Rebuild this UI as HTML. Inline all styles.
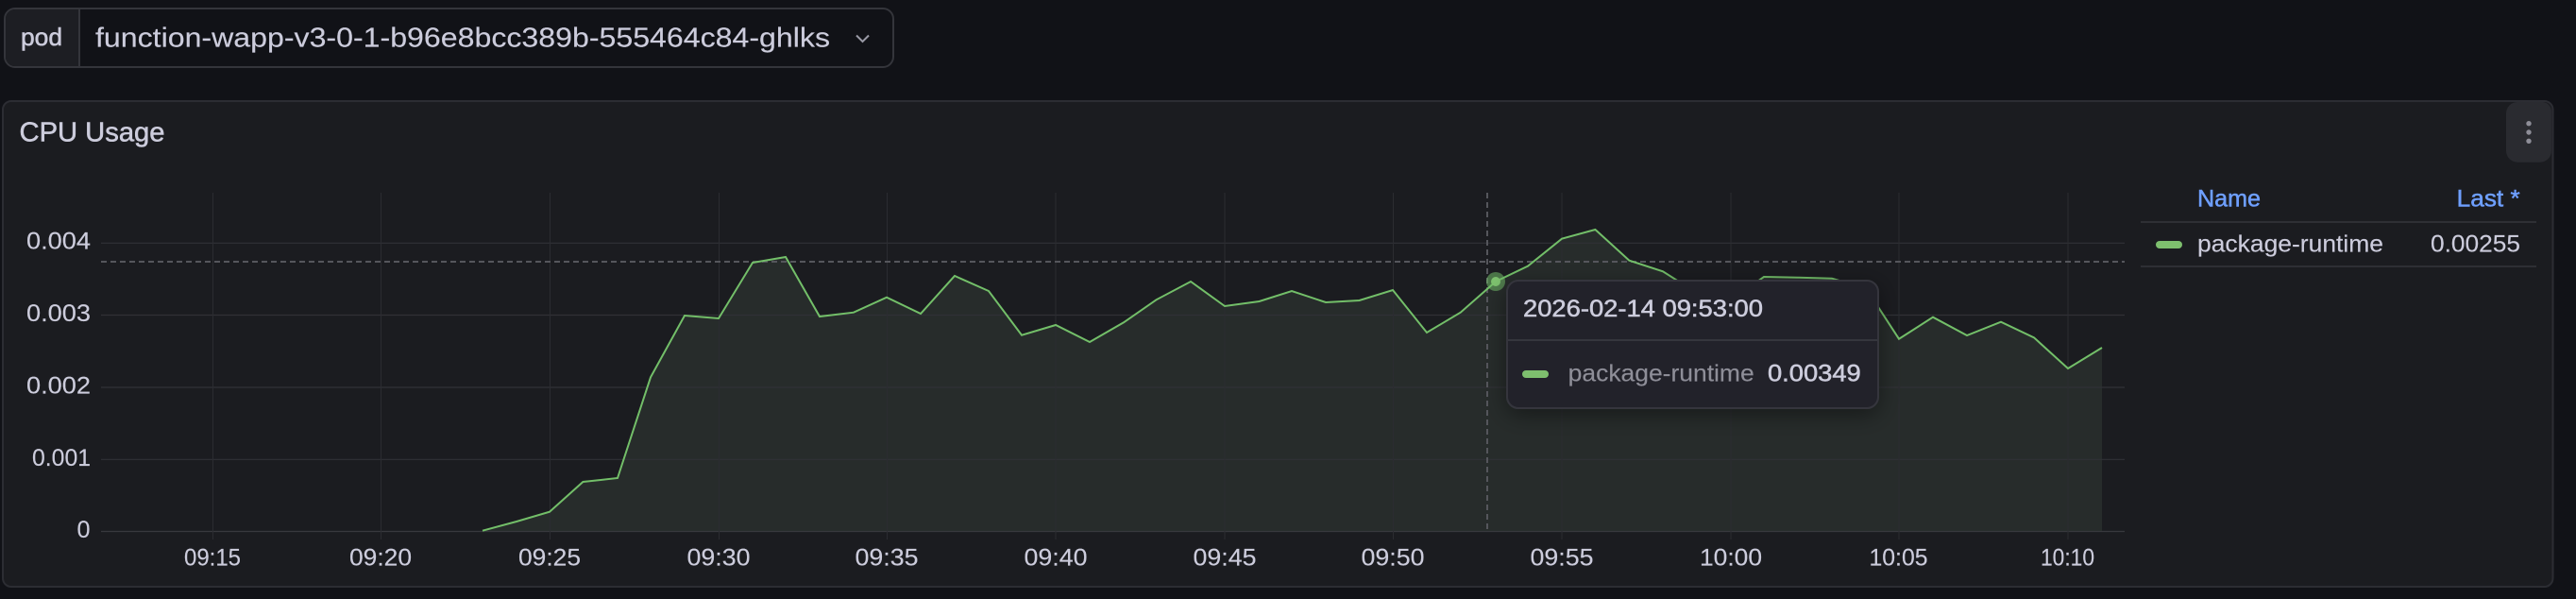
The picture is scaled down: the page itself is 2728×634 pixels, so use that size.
<!DOCTYPE html>
<html lang="en">
<head>
<meta charset="utf-8">
<title>CPU Usage</title>
<style>
html,body{margin:0;padding:0;width:2728px;height:634px;overflow:hidden;background:#111217}
svg{display:block}
text{font-family:"Liberation Sans",sans-serif;font-size:25px;fill:#ccccdc;stroke:#ccccdc;stroke-width:.15}
.m{stroke:#ccccdc;stroke-width:.55}
.xl{text-anchor:middle}
.grid line{stroke:#303136;stroke-width:1.2}
.grid g line{stroke:#2b2c31;stroke-width:1}
</style>
</head>
<body>
<svg width="2728" height="634" viewBox="0 0 2728 634" xmlns="http://www.w3.org/2000/svg">
  <defs>
    <filter id="sh" x="-15%" y="-30%" width="130%" height="170%">
      <feDropShadow dx="0" dy="6" stdDeviation="12" flood-color="#000" flood-opacity=".42"/>
    </filter>
  </defs>
  <rect width="2728" height="634" fill="#111217"/>

  <!-- pod variable -->
  <rect x="5" y="9" width="941" height="62" rx="11" fill="#111217" stroke="#34353b" stroke-width="2"/>
  <path d="M84 10H16a10 10 0 0 0-10 10v40a10 10 0 0 0 10 10h68z" fill="#1d1e23"/>
  <line x1="84" y1="9" x2="84" y2="71" stroke="#34353b" stroke-width="2"/>
  <text x="22" y="48" class="m" textLength="44" lengthAdjust="spacingAndGlyphs" style="font-size:26px">pod</text>
  <text x="101" y="49.5" textLength="778" lengthAdjust="spacingAndGlyphs" style="font-size:29px">function-wapp-v3-0-1-b96e8bcc389b-555464c84-ghlks</text>
  <path d="M907 37.5l6.5 6.5 6.5-6.5" fill="none" stroke="#9a9aa6" stroke-width="2"/>

  <!-- panel -->
  <rect x="3" y="107" width="2700.5" height="514" rx="9" fill="#1b1c20" stroke="#2c2d33" stroke-width="2"/>
  <text x="20.5" y="149.5" class="m" textLength="154" lengthAdjust="spacingAndGlyphs" style="font-size:29px">CPU Usage</text>

  <!-- menu -->
  <path d="M2666 108h27a10 10 0 0 1 9 10v41.700a12 12 0 0 1-12 12h-24a12 12 0 0 1-12-12V120a12 12 0 0 1 12-12z" fill="#2a2b30"/>
  <circle cx="2678" cy="130.700" r="2.700" fill="#8e8e98"/>
  <circle cx="2678" cy="140" r="2.700" fill="#8e8e98"/>
  <circle cx="2678" cy="149.300" r="2.700" fill="#8e8e98"/>

  <!-- fill under series -->
  <polygon fill="#272c2b" points="511,562.500 547,552 582,541.700 617.400,510 654,506 689,399.300 725,334 761,337 797,278 832,272 868,335 904,330.700 939,314.700 975,332 1011,292 1047,308 1082,354.700 1118,344 1154,362 1190,341.300 1224.500,317.300 1261,298 1297,324 1333.500,319 1368,308 1404,320 1439.500,318 1475,307 1511,352 1546.700,330.700 1584,298 1618,281.700 1654,252.700 1689.400,243 1725.400,275.700 1761,287.300 1797,310 1833,318 1868,293 1904,293.700 1940,294.700 1976,305 2011,358.700 2047,335.700 2083,355 2119,340.700 2154,357.300 2190,390 2226,368 2226,562.500"/>

  <!-- grid -->
  <g class="grid">
    <line x1="107" y1="257.300" x2="2250" y2="257.300"/>
    <line x1="107" y1="333.500" x2="2250" y2="333.500"/>
    <line x1="107" y1="410" x2="2250" y2="410"/>
    <line x1="107" y1="486.300" x2="2250" y2="486.300"/>
    <line x1="107" y1="562.500" x2="2250" y2="562.500" style="stroke:#37383d"/>
    <g>
    <line x1="225.500" y1="204" x2="225.500" y2="571"/>
    <line x1="403.500" y1="204" x2="403.500" y2="571"/>
    <line x1="582.500" y1="204" x2="582.500" y2="571"/>
    <line x1="761.500" y1="204" x2="761.500" y2="571"/>
    <line x1="939.500" y1="204" x2="939.500" y2="571"/>
    <line x1="1118" y1="204" x2="1118" y2="571"/>
    <line x1="1297" y1="204" x2="1297" y2="571"/>
    <line x1="1475.500" y1="204" x2="1475.500" y2="571"/>
    <line x1="1654" y1="204" x2="1654" y2="571"/>
    <line x1="1833" y1="204" x2="1833" y2="571"/>
    <line x1="2011" y1="204" x2="2011" y2="571"/>
    <line x1="2190" y1="204" x2="2190" y2="571"/>
    </g>
  </g>

  <!-- threshold and crosshair -->
  <line x1="107" y1="277" x2="2250" y2="277" stroke="#55565c" stroke-width="2" stroke-dasharray="6 4"/>
  <line x1="1575" y1="204" x2="1575" y2="562" stroke="#55565c" stroke-width="2" stroke-dasharray="6 4"/>

  <!-- series -->
  <polyline fill="none" stroke="#73bf69" stroke-width="2" stroke-linejoin="miter" points="511,561.700 547,552 582,541.700 617.400,510 654,506 689,399.300 725,334 761,337 797,278 832,272 868,335 904,330.700 939,314.700 975,332 1011,292 1047,308 1082,354.700 1118,344 1154,362 1190,341.300 1224.500,317.300 1261,298 1297,324 1333.500,319 1368,308 1404,320 1439.500,318 1475,307 1511,352 1546.700,330.700 1584,298 1618,281.700 1654,252.700 1689.400,243 1725.400,275.700 1761,287.300 1797,310 1833,318 1868,293 1904,293.700 1940,294.700 1976,305 2011,358.700 2047,335.700 2083,355 2119,340.700 2154,357.300 2190,390 2226,368"/>
  <circle cx="1584" cy="298" r="10" fill="#73bf69" fill-opacity=".55"/>
  <circle cx="1584" cy="298" r="5" fill="#7ec36f"/>

  <!-- y axis -->
  <text x="28" y="263.500" textLength="68" lengthAdjust="spacingAndGlyphs">0.004</text>
  <text x="28" y="340" textLength="68" lengthAdjust="spacingAndGlyphs">0.003</text>
  <text x="28" y="416.500" textLength="68" lengthAdjust="spacingAndGlyphs">0.002</text>
  <text x="34" y="493" textLength="62" lengthAdjust="spacingAndGlyphs">0.001</text>
  <text x="81.500" y="569" textLength="14" lengthAdjust="spacingAndGlyphs">0</text>

  <!-- x axis -->
  <g>
    <text class="xl" x="225" y="598.700" textLength="60" lengthAdjust="spacingAndGlyphs">09:15</text>
    <text class="xl" x="403" y="598.700" textLength="66" lengthAdjust="spacingAndGlyphs">09:20</text>
    <text class="xl" x="582" y="598.700" textLength="66" lengthAdjust="spacingAndGlyphs">09:25</text>
    <text class="xl" x="761" y="598.700" textLength="67" lengthAdjust="spacingAndGlyphs">09:30</text>
    <text class="xl" x="939" y="598.700" textLength="67" lengthAdjust="spacingAndGlyphs">09:35</text>
    <text class="xl" x="1118" y="598.700" textLength="67" lengthAdjust="spacingAndGlyphs">09:40</text>
    <text class="xl" x="1297" y="598.700" textLength="67" lengthAdjust="spacingAndGlyphs">09:45</text>
    <text class="xl" x="1475" y="598.700" textLength="67" lengthAdjust="spacingAndGlyphs">09:50</text>
    <text class="xl" x="1654" y="598.700" textLength="67" lengthAdjust="spacingAndGlyphs">09:55</text>
    <text class="xl" x="1833" y="598.700" textLength="66" lengthAdjust="spacingAndGlyphs">10:00</text>
    <text class="xl" x="2010.500" y="598.700" textLength="62" lengthAdjust="spacingAndGlyphs">10:05</text>
    <text class="xl" x="2189.500" y="598.700" textLength="57" lengthAdjust="spacingAndGlyphs">10:10</text>
  </g>

  <!-- legend -->
  <text x="2327" y="218.700" textLength="67" lengthAdjust="spacingAndGlyphs" style="fill:#6e9fff;stroke:#6e9fff;stroke-width:.5">Name</text>
  <text x="2601.700" y="218.700" textLength="67" lengthAdjust="spacingAndGlyphs" style="fill:#6e9fff;stroke:#6e9fff;stroke-width:.5">Last *</text>
  <line x1="2267" y1="235" x2="2686" y2="235" stroke="#2e2f34" stroke-width="2"/>
  <rect x="2283" y="255" width="28" height="8" rx="4" fill="#7ebf6e"/>
  <text x="2327" y="266.700" textLength="197" lengthAdjust="spacingAndGlyphs">package-runtime</text>
  <text x="2574" y="266.700" textLength="95" lengthAdjust="spacingAndGlyphs">0.00255</text>
  <line x1="2267" y1="282" x2="2686" y2="282" stroke="#2e2f34" stroke-width="2"/>

  <!-- tooltip -->
  <rect x="1596" y="297" width="393" height="135" rx="12" fill="#222429" stroke="#35363d" stroke-width="2" filter="url(#sh)"/>
  <line x1="1596" y1="360" x2="1989" y2="360" stroke="#35363d" stroke-width="2"/>
  <text x="1613" y="335" class="m" textLength="254" lengthAdjust="spacingAndGlyphs">2026-02-14 09:53:00</text>
  <rect x="1612" y="392" width="28" height="8" rx="4" fill="#7ebf6e"/>
  <text x="1660.700" y="403.300" textLength="197" lengthAdjust="spacingAndGlyphs" style="fill:#8e8e98;stroke:#8e8e98">package-runtime</text>
  <text x="1872" y="403.300" class="m" textLength="98.700" lengthAdjust="spacingAndGlyphs">0.00349</text>
</svg>
</body>
</html>
